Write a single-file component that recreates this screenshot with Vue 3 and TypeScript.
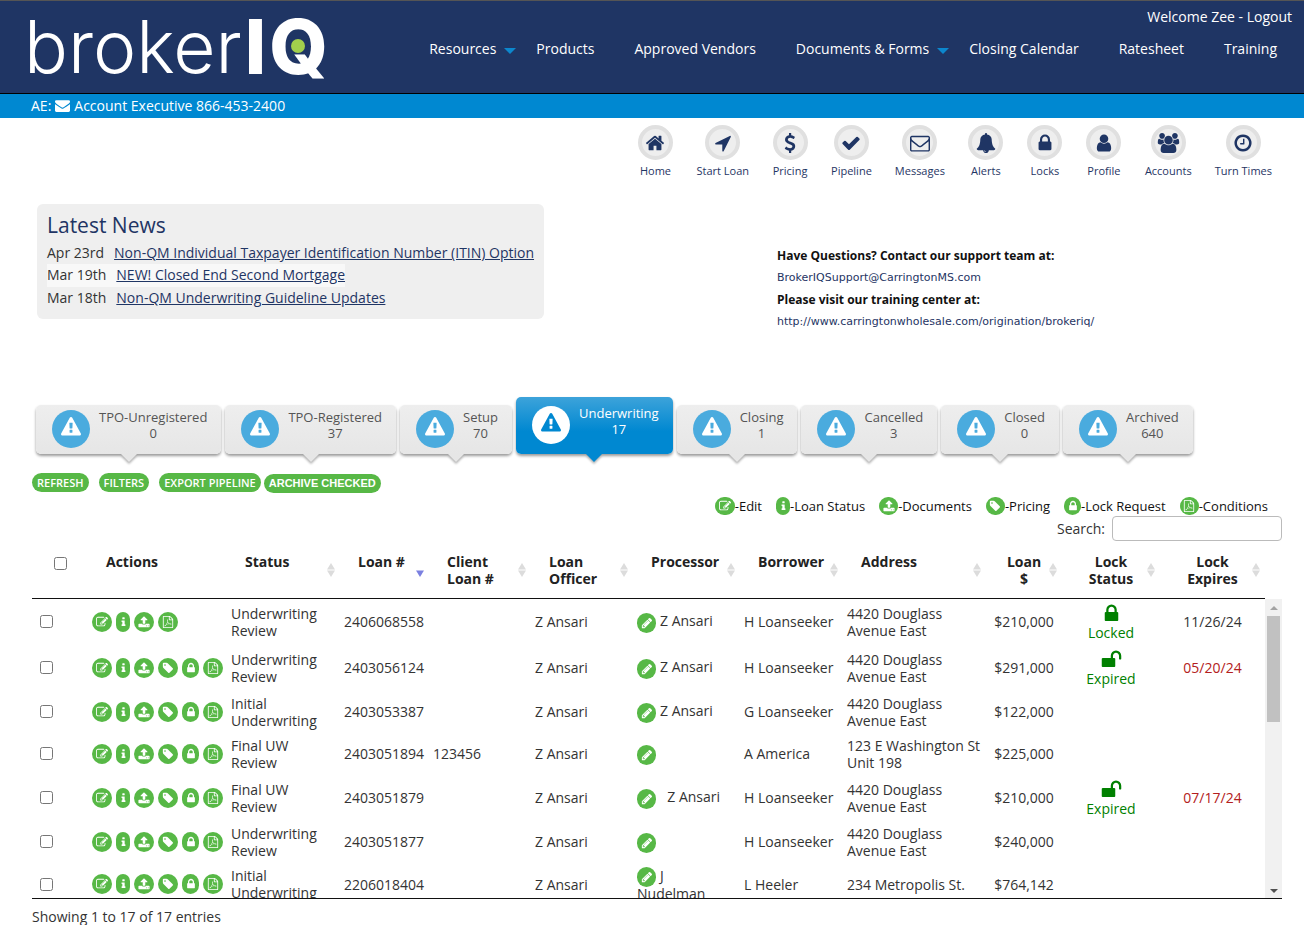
<script setup lang="ts">
import { ref } from 'vue'

type IconName =
  | 'home' | 'arrow' | 'dollar' | 'check' | 'envelopeO' | 'envelope' | 'bell' | 'lock' | 'unlock'
  | 'user' | 'users' | 'clock' | 'warning' | 'edit' | 'info' | 'upload' | 'tag' | 'pdf' | 'pencil'

const icons: Record<IconName, string> = {
  home: 'M1472 992v480q0 26-19 45t-45 19h-384v-384h-256v384h-384q-26 0-45-19t-19-45v-480q0-1 .5-3t.5-3l575-474 575 474q1 2 1 6zm223-69l-62 74q-8 9-21 11h-3q-13 0-21-7l-692-577-692 577q-12 8-24 7-13-2-21-11l-62-74q-8-10-7-23.5t11-21.5l719-599q32-26 76-26t76 26l244 204v-195q0-14 9-23t23-9h192q14 0 23 9t9 23v408l219 182q10 8 11 21.5t-7 23.5z',
  arrow: 'M1593 349l-640 1280q-17 35-57 35-5 0-15-2-22-5-35.5-22.5t-13.5-39.5v-576h-576q-22 0-39.5-13.5t-22.5-35.5 4-42 29-30l1280-640q13-7 29-7 27 0 45 19 15 14 18.5 34.5t-6.5 39.5z',
  dollar: 'M1362 1185q0 153-99.5 263.5t-258.5 136.5v175q0 14-9 23t-23 9h-135q-13 0-22.5-9.5t-9.5-22.5v-175q-66-9-127.5-31t-101.5-44.5-74-48-46.5-37.5-17.5-18q-17-21-2-41l103-135q7-10 23-12 15-2 24 9l2 2q113 99 243 125 37 8 74 8 81 0 142.5-43t61.5-122q0-28-15-53t-33.5-42-58.5-37.5-66-32-80-32.5q-39-16-61.5-25t-61.5-26.5-62.5-31-56.5-35.5-53.5-42.5-43.5-49-35.5-58-21-66.5-8.5-78q0-138 98-242t255-134v-180q0-13 9.5-22.5t22.5-9.5h135q14 0 23 9t9 23v176q57 6 110.5 23t87 33.5 63.5 37.5 39 29 15 14q17 18 5 38l-81 146q-8 15-23 16-14 3-27-7-3-3-14.5-12t-39-26.5-58.5-32-74.5-26-85.5-11.5q-95 0-155 43t-60 111q0 26 8.5 48t29.5 41.5 39.5 33 56 31 60.5 27 70 27.5q53 20 81 31.5t76 35 75.5 42.5 62 50 53 63.5 31.5 76.5 13 94z',
  check: 'M1671 566q0 40-28 68l-724 724-136 136q-28 28-68 28t-68-28l-136-136-362-362q-28-28-28-68t28-68l136-136q28-28 68-28t68 28l294 295 656-657q28-28 68-28t68 28l136 136q28 28 28 68z',
  envelopeO: 'M1664 1504v-768q-32 36-69 66-268 206-426 338-51 43-83 67t-86.5 48.5-102.5 24.5h-2q-48 0-102.5-24.5t-86.5-48.5-83-67q-158-132-426-338-37-30-69-66v768q0 13 9.5 22.5t22.5 9.5h1472q13 0 22.5-9.5t9.5-22.5zm0-1051v-24.5l-.5-13-3-12.5-5.5-9-9-7.5-14-2.5h-1472q-13 0-22.5 9.5t-9.5 22.5q0 168 147 284 193 152 401 317 6 5 35 29.5t46 37.5 44.5 31.5 50.5 27.5 43 9h2q20 0 43-9t50.5-27.5 44.5-31.5 46-37.5 35-29.5q208-165 401-317 54-43 100.5-115.5t46.5-131.5zm128-37v1088q0 66-47 113t-113 47h-1472q-66 0-113-47t-47-113v-1088q0-66 47-113t113-47h1472q66 0 113 47t47 113z',
  envelope: 'M1792 710v794q0 66-47 113t-113 47h-1472q-66 0-113-47t-47-113v-794q44 49 101 87 362 246 497 345 57 42 92.5 65.5t94.5 48 110 24.5h2q51 0 110-24.5t94.5-48 92.5-65.5q170-123 498-345 57-39 100-87zm0-294q0 79-49 151t-122 123q-376 261-468 325-10 7-42.5 30.5t-54 38-52 32.5-57.5 27-50 9h-2q-23 0-50-9t-57.5-27-52-32.5-54-38-42.5-30.5q-91-64-262-182.5t-205-142.5q-62-42-117-115.5t-55-136.5q0-78 41.5-130t118.5-52h1472q65 0 112.5 47t47.5 113z',
  bell: 'M912 1696q0-16-16-16-59 0-101.5-42.5t-42.5-101.5q0-16-16-16t-16 16q0 73 51.5 124.5t124.5 51.5q16 0 16-16zm816-288q0 52-38 90t-90 38h-448q0 106-75 181t-181 75-181-75-75-181h-448q-52 0-90-38t-38-90q50-42 91-88t85-119.5 74.5-158.5 50-206 19.5-260q0-152 117-282.5t307-158.5q-8-19-8-39 0-40 28-68t68-28 68 28 28 68q0 20-8 39 190 28 307 158.5t117 282.5q0 139 19.5 260t50 206 74.5 158.5 85 119.5 91 88z',
  lock: 'M640 768h512v-192q0-106-75-181t-181-75-181 75-75 181v192zm832 96v576q0 40-28 68t-68 28h-960q-40 0-68-28t-28-68v-576q0-40 28-68t68-28h32v-192q0-184 132-316t316-132 316 132 132 316v192h32q40 0 68 28t28 68z',
  unlock: 'M1728 576v256q0 26-19 45t-45 19h-64q-26 0-45-19t-19-45v-256q0-106-75-181t-181-75-181 75-75 181v192h96q40 0 68 28t28 68v576q0 40-28 68t-68 28h-960q-40 0-68-28t-28-68v-576q0-40 28-68t68-28h672v-192q0-185 131.5-316.5t316.5-131.5 316.5 131.5 131.5 316.5z',
  user: 'M1536 1399q0 109-62.5 187t-150.5 78h-854q-88 0-150.5-78t-62.5-187q0-85 8.5-160.5t31.5-152 58.5-131 94-89 134.5-34.5q131 128 313 128t313-128q76 0 134.5 34.5t94 89 58.5 131 31.5 152 8.5 160.5zm-256-887q0 159-112.5 271.5t-271.5 112.5-271.5-112.5-112.5-271.5 112.5-271.5 271.5-112.5 271.5 112.5 112.5 271.5z',
  users: 'M657 896q-162 5-265 128h-134q-82 0-138-40.5t-56-118.5q0-353 124-353 6 0 43.5 21t97.5 42.5 119 21.5q67 0 133-23-5 37-5 66 0 159 81 256zm1071 637q0 120-73 189.5t-194 69.5h-874q-121 0-194-69.5t-73-189.5q0-53 3.5-103.5t14-109 26.5-108.5 43-97.5 62-81 85.5-53.5 111.5-20q10 0 43 21.5t73 48 107 48 135 21.5 135-21.5 107-48 73-48 43-21.5q61 0 111.5 20t85.5 53.5 62 81 43 97.5 26.5 108.5 14 109 3.5 103.5zm-1024-1277q0 106-75 181t-181 75-181-75-75-181 75-181 181-75 181 75 75 181zm704 384q0 159-112.5 271.5t-271.5 112.5-271.5-112.5-112.5-271.5 112.5-271.5 271.5-112.5 271.5 112.5 112.5 271.5zm576 225q0 78-56 118.5t-138 40.5h-134q-103-123-265-128 81-97 81-256 0-29-5-66 66 23 133 23 59 0 119-21.5t97.5-42.5 43.5-21q124 0 124 353zm-128-609q0 106-75 181t-181 75-181-75-75-181 75-181 181-75 181 75 75 181z',
  clock: 'M1024 544v448q0 14-9 23t-23 9h-320q-14 0-23-9t-9-23v-64q0-14 9-23t23-9h224v-352q0-14 9-23t23-9h64q14 0 23 9t9 23zm416 352q0-148-73-273t-198-198-273-73-273 73-198 198-73 273 73 273 198 198 273 73 273-73 198-198 73-273zm224 0q0 209-103 385.5t-279.5 279.5-385.5 103-385.5-103-279.5-279.5-103-385.5 103-385.5 279.5-279.5 385.5-103 385.5 103 279.5 279.5 103 385.5z',
  warning: 'M1024 1375v-190q0-14-9.5-23.5t-22.5-9.5h-192q-13 0-22.5 9.5t-9.5 23.5v190q0 14 9.5 23.5t22.5 9.5h192q13 0 22.5-9.5t9.5-23.5zm-2-374l18-459q0-12-10-19-13-11-24-11h-220q-11 0-24 11-10 7-10 21l17 457q0 10 10 16.5t24 6.5h185q14 0 23.5-6.5t10.5-16.5zm-14-934l768 1408q35 63-2 126-17 29-46.5 46t-63.5 17h-1536q-34 0-63.5-17t-46.5-46q-37-63-2-126l768-1408q17-31 47-49t65-18 65 18 47 49z',
  edit: 'M888 1184l116-116-152-152-116 116v56h96v96h56zm440-720q-16-16-33 1l-350 350q-17 17-1 33t33-1l350-350q17-17 1-33zm80 594v190q0 119-84.5 203.5t-203.5 84.5h-832q-119 0-203.5-84.5t-84.5-203.5v-832q0-119 84.5-203.5t203.5-84.5h832q63 0 117 25 15 7 18 23 3 17-9 29l-49 49q-14 14-32 8-23-6-45-6h-832q-66 0-113 47t-47 113v832q0 66 47 113t113 47h832q66 0 113-47t47-113v-126q0-13 9-22l64-64q15-15 35-7t20 29zm-96-738l288 288-672 672h-288v-288zm444 132l-92 92-288-288 92-92q28-28 68-28t68 28l152 152q28 28 28 68t-28 68z',
  info: 'M1216 1344v128q0 26-19 45t-45 19h-512q-26 0-45-19t-19-45v-128q0-26 19-45t45-19h64v-384h-64q-26 0-45-19t-19-45v-128q0-26 19-45t45-19h384q26 0 45 19t19 45v576h64q26 0 45 19t19 45zm-128-1152v192q0 26-19 45t-45 19h-256q-26 0-45-19t-19-45v-192q0-26 19-45t45-19h256q26 0 45 19t19 45z',
  upload: 'M1344 1472q0-26-19-45t-45-19-45 19-19 45 19 45 45 19 45-19 19-45zm256 0q0-26-19-45t-45-19-45 19-19 45 19 45 45 19 45-19 19-45zm128-224v320q0 40-28 68t-68 28h-1472q-40 0-68-28t-28-68v-320q0-40 28-68t68-28h427q21 56 70.5 92t110.5 36h256q61 0 110.5-36t70.5-92h427q40 0 68 28t28 68zm-325-648q-17 40-59 40h-256v448q0 26-19 45t-45 19h-256q-26 0-45-19t-19-45v-448h-256q-42 0-59-40-17-39 14-69l448-448q18-19 45-19t45 19l448 448q31 30 14 69z',
  tag: 'M576 448q0-53-37.5-90.5t-90.5-37.5-90.5 37.5-37.5 90.5 37.5 90.5 90.5 37.5 90.5-37.5 37.5-90.5zm1067 576q0 53-37 90l-491 492q-39 37-91 37-53 0-90-37l-715-716q-38-37-64.5-101t-26.5-117v-416q0-52 38-90t90-38h416q53 0 117 26.5t102 64.5l715 714q37 39 37 91z',
  pdf: 'M1596 380q28 28 48 76t20 88v1152q0 40-28 68t-68 28h-1344q-40 0-68-28t-28-68v-1600q0-40 28-68t68-28h896q40 0 88 20t76 48zm-444-244v376h376q-10-29-22-41l-313-313q-12-12-41-22zm384 1528v-1024h-416q-40 0-68-28t-28-68v-416h-768v1536h1280zm-514-593q33 26 84 56 59-7 117-7 147 0 177 49 16 22 2 52 0 1-1 2l-2 2v1q-6 38-71 38-48 0-115-20t-130-53q-221 24-392 83-153 262-242 262-15 0-28-7l-24-12q-1-1-6-5-10-10-6-36 9-40 56-91.5t132-96.5q14-9 23 6 2 2 2 4 52-85 107-197 68-136 104-262-24-82-30.5-159.5t6.5-127.5q11-40 42-40h22q23 0 35 15 18 21 9 68-2 6-4 8 1 3 1 8v30q-2 123-14 192 55 164 146 238zm-576 411q52-24 137-158-51 40-87.5 84t-49.5 74zm398-920q-15 42-2 132 1-7 7-44 0-3 7-43 1-4 4-8-1-1-1-2t-1-2-1-2q-1-22-13-36 0 1-1 2v2zm-124 661q135-54 284-81-2-1-13-9.5t-16-13.5q-76-67-127-176-27 86-83 197-30 56-45 83zm646-16q-24-24-140-24 76 28 124 28 14 0 18-1 0-1-2-3z',
  pencil: 'M491 1536l91-91-235-235-91 91v107h128v128h107zm523-928q0-22-22-22-10 0-17 7l-542 542q-7 7-7 17 0 22 22 22 10 0 17-7l542-542q7-7 7-17zm-54-192l416 416-832 832h-416v-416zm683 96q0 53-37 90l-166 166-416-416 166-165q36-38 90-38 53 0 91 38l235 234q37 39 37 91z',
}

const nav = [
  { label: 'Resources', menu: true },
  { label: 'Products', menu: false },
  { label: 'Approved Vendors', menu: false },
  { label: 'Documents & Forms', menu: true },
  { label: 'Closing Calendar', menu: false },
  { label: 'Ratesheet', menu: false },
  { label: 'Training', menu: false },
]

const shortcuts: { label: string; icon: IconName }[] = [
  { label: 'Home', icon: 'home' },
  { label: 'Start Loan', icon: 'arrow' },
  { label: 'Pricing', icon: 'dollar' },
  { label: 'Pipeline', icon: 'check' },
  { label: 'Messages', icon: 'envelopeO' },
  { label: 'Alerts', icon: 'bell' },
  { label: 'Locks', icon: 'lock' },
  { label: 'Profile', icon: 'user' },
  { label: 'Accounts', icon: 'users' },
  { label: 'Turn Times', icon: 'clock' },
]

const news = [
  { date: 'Apr 23rd', title: 'Non-QM Individual Taxpayer Identification Number (ITIN) Option' },
  { date: 'Mar 19th', title: 'NEW! Closed End Second Mortgage' },
  { date: 'Mar 18th', title: 'Non-QM Underwriting Guideline Updates' },
]

const stages = [
  { label: 'TPO-Unregistered', count: 0 },
  { label: 'TPO-Registered', count: 37 },
  { label: 'Setup', count: 70 },
  { label: 'Underwriting', count: 17 },
  { label: 'Closing', count: 1 },
  { label: 'Cancelled', count: 3 },
  { label: 'Closed', count: 0 },
  { label: 'Archived', count: 640 },
]
const activeStage = ref('Underwriting')

const legend: { label: string; icon: IconName }[] = [
  { label: 'Edit', icon: 'edit' },
  { label: 'Loan Status', icon: 'info' },
  { label: 'Documents', icon: 'upload' },
  { label: 'Pricing', icon: 'tag' },
  { label: 'Lock Request', icon: 'lock' },
  { label: 'Conditions', icon: 'pdf' },
]

const columns = [
  { key: 'status', lines: ['Status'], sort: 'both' },
  { key: 'loan', lines: ['Loan #'], sort: 'down' },
  { key: 'client', lines: ['Client', 'Loan #'], sort: 'both' },
  { key: 'officer', lines: ['Loan', 'Officer'], sort: 'both' },
  { key: 'processor', lines: ['Processor'], sort: 'both' },
  { key: 'borrower', lines: ['Borrower'], sort: 'both' },
  { key: 'address', lines: ['Address'], sort: 'both' },
  { key: 'amount', lines: ['Loan', '$'], sort: 'both' },
  { key: 'lock', lines: ['Lock', 'Status'], sort: 'both' },
  { key: 'expires', lines: ['Lock', 'Expires'], sort: 'both' },
]
const colKeys = ['check', 'actions', ...columns.map((c) => c.key)]

const shortActions: IconName[] = ['edit', 'info', 'upload', 'pdf']
const allActions: IconName[] = ['edit', 'info', 'upload', 'tag', 'lock', 'pdf']

interface Loan {
  actions: IconName[]
  status: string[]
  loan: string
  client?: string
  processor: string[]
  borrower: string
  address: string[]
  amount: string
  lock?: 'Locked' | 'Expired'
  expires?: string
}

const douglass = ['4420 Douglass', 'Avenue East']
const loans: Loan[] = [
  { actions: shortActions, status: ['Underwriting', 'Review'], loan: '2406068558', processor: ['Z Ansari'], borrower: 'H Loanseeker', address: douglass, amount: '$210,000', lock: 'Locked', expires: '11/26/24' },
  { actions: allActions, status: ['Underwriting', 'Review'], loan: '2403056124', processor: ['Z Ansari'], borrower: 'H Loanseeker', address: douglass, amount: '$291,000', lock: 'Expired', expires: '05/20/24' },
  { actions: allActions, status: ['Initial', 'Underwriting'], loan: '2403053387', processor: ['Z Ansari'], borrower: 'G Loanseeker', address: douglass, amount: '$122,000' },
  { actions: allActions, status: ['Final UW', 'Review'], loan: '2403051894', client: '123456', processor: [], borrower: 'A America', address: ['123 E Washington St', 'Unit 198'], amount: '$225,000' },
  { actions: allActions, status: ['Final UW', 'Review'], loan: '2403051879', processor: ['\u00a0\u00a0Z Ansari'], borrower: 'H Loanseeker', address: douglass, amount: '$210,000', lock: 'Expired', expires: '07/17/24' },
  { actions: allActions, status: ['Underwriting', 'Review'], loan: '2403051877', processor: [], borrower: 'H Loanseeker', address: douglass, amount: '$240,000' },
  { actions: allActions, status: ['Initial', 'Underwriting'], loan: '2206018404', processor: ['J', 'Nudelman'], borrower: 'L Heeler', address: ['234 Metropolis St.'], amount: '$764,142' },
]

const search = ref('')
</script>

<template>
  <div class="page">
    <header class="top">
      <a class="logo" href="#" aria-label="brokerIQ">
        <span class="logo-light">broker</span><span class="logo-bold">I</span><span class="logo-q">Q<i class="logo-dot"></i></span>
      </a>
      <div class="top-right">
        <div class="welcome">Welcome Zee - <a href="#">Logout</a></div>
        <nav class="nav">
          <a v-for="n in nav" :key="n.label" href="#" class="nav-link">{{ n.label }}<i v-if="n.menu" class="caret"></i></a>
        </nav>
      </div>
    </header>

    <div class="ae">
      AE:
      <svg class="ae-icon" viewBox="0 0 1792 1792" aria-hidden="true"><path :d="icons.envelope" /></svg>
      <a href="#">Account Executive 866-453-2400</a>
    </div>

    <nav class="shortcuts" aria-label="Shortcuts">
      <a v-for="s in shortcuts" :key="s.label" href="#" class="shortcut">
        <span class="ring">
          <svg :viewBox="s.icon === 'users' ? '0 0 2048 1792' : '0 0 1792 1792'" :class="{ wide: s.icon === 'users' }" aria-hidden="true"><path :d="icons[s.icon]" /></svg>
        </span>
        <span>{{ s.label }}</span>
      </a>
    </nav>

    <main class="main">
      <section class="intro">
        <div class="news">
          <h2>Latest News</h2>
          <div v-for="(item, i) in news" :key="item.date" class="news-row" :class="{ even: i % 2 === 1 }">
            <span>{{ item.date }}</span><a href="#">{{ item.title }}</a>
          </div>
        </div>
        <div class="support">
          <b>Have Questions? Contact our support team at:</b>
          <a href="#">BrokerIQSupport@CarringtonMS.com</a>
          <b>Please visit our training center at:</b>
          <a href="#">http://www.carringtonwholesale.com/origination/brokeriq/</a>
        </div>
      </section>

      <div class="stages">
        <button v-for="s in stages" :key="s.label" type="button" class="stage" :class="{ active: s.label === activeStage }" @click="activeStage = s.label">
          <span class="badge"><svg viewBox="0 0 1792 1792" aria-hidden="true"><path :d="icons.warning" /></svg></span>
          <span class="stage-text">{{ s.label }}<br />{{ s.count }}</span>
        </button>
      </div>

      <div class="tools">
        <button type="button" class="pill">REFRESH</button>
        <button type="button" class="pill">FILTERS</button>
        <button type="button" class="pill">EXPORT PIPELINE</button>
        <button type="button" class="pill archive">ARCHIVE CHECKED</button>
      </div>

      <div class="legend">
        <span v-for="l in legend" :key="l.label" class="legend-item">
          <i class="act" :class="'act-' + l.icon"><svg viewBox="0 0 1792 1792" aria-hidden="true"><path :d="icons[l.icon]" /></svg></i>-{{ l.label }}
        </span>
      </div>

      <div class="search">
        <label for="search">Search:</label>
        <input id="search" v-model="search" type="text" />
      </div>

      <div class="grid">
        <table class="head">
          <colgroup><col v-for="k in colKeys" :key="k" :class="'c-' + k" /></colgroup>
          <thead>
            <tr>
              <th class="th-check"><input type="checkbox" aria-label="Select all loans" /></th>
              <th>Actions</th>
              <th v-for="c in columns" :key="c.key" :class="'th-' + c.key">
                <template v-for="(line, i) in c.lines" :key="line"><br v-if="i" />{{ line }}</template>
                <svg class="sort" viewBox="0 0 8 14" aria-hidden="true">
                  <path v-if="c.sort === 'both'" d="M4 0L8 6.500H0zM4 14L8 7.500H0z" fill="#dcdcdc" />
                  <path v-else d="M4 14L8 7.500H0z" fill="#7b80e0" />
                </svg>
              </th>
            </tr>
          </thead>
        </table>
        <div class="body">
          <div class="scroller">
            <table>
              <colgroup><col v-for="k in colKeys" :key="k" :class="'c-' + k" /></colgroup>
              <tbody>
                <tr v-for="row in loans" :key="row.loan">
                  <td class="td-check"><input type="checkbox" :aria-label="'Select loan ' + row.loan" /></td>
                  <td>
                    <div class="acts">
                      <button v-for="a in row.actions" :key="a" type="button" class="act" :class="'act-' + a" :aria-label="a">
                        <svg viewBox="0 0 1792 1792" aria-hidden="true"><path :d="icons[a]" /></svg>
                      </button>
                    </div>
                  </td>
                  <td>{{ row.status[0] }}<br />{{ row.status[1] }}</td>
                  <td>{{ row.loan }}</td>
                  <td>{{ row.client }}</td>
                  <td>Z Ansari</td>
                  <td>
                    <button type="button" class="act act-pencil" aria-label="Edit processor"><svg viewBox="0 0 1792 1792" aria-hidden="true"><path :d="icons.pencil" /></svg></button>
                    <template v-for="(line, i) in row.processor" :key="line"><br v-if="i" />{{ line }}</template>
                  </td>
                  <td>{{ row.borrower }}</td>
                  <td><template v-for="(line, i) in row.address" :key="line"><br v-if="i" />{{ line }}</template></td>
                  <td class="mid">{{ row.amount }}</td>
                  <td class="mid lock">
                    <template v-if="row.lock">
                      <svg viewBox="0 0 1792 1792" aria-hidden="true"><path :d="icons[row.lock === 'Locked' ? 'lock' : 'unlock']" /></svg>
                      {{ row.lock }}
                    </template>
                  </td>
                  <td class="mid" :class="{ late: row.lock === 'Expired' }">{{ row.expires }}</td>
                </tr>
              </tbody>
            </table>
          </div>
          <div class="bar" aria-hidden="true">
            <i class="bar-up"></i>
            <i class="bar-thumb"></i>
            <i class="bar-down"></i>
          </div>
        </div>
      </div>
      <p class="showing">Showing 1 to 17 of 17 entries</p>
    </main>
  </div>
</template>

<style>
body {
  background: #fff;
}
</style>

<style scoped>
.page {
  font-family: 'Open Sans', sans-serif;
  font-size: 14px;
  line-height: 17px;
  color: #333;
}
.page * {
  box-sizing: border-box;
}
a {
  color: inherit;
  text-decoration: none;
}
button {
  border: 0;
  padding: 0;
  cursor: pointer;
  font-family: inherit;
}
svg {
  fill: currentColor;
  display: block;
}

.top {
  display: flex;
  justify-content: space-between;
  height: 94px;
  background: #1f3564;
  border-top: 1px solid #555;
  border-bottom: 1px solid #000;
  color: #fff;
}
.logo {
  display: flex;
  gap: 3px;
  padding-left: 24px;
  font-family: Inter, sans-serif;
  font-size: 73px;
  line-height: 92px;
}
.logo-light {
  font-weight: 300;
}
.logo-bold,
.logo-q {
  font-weight: 800;
  font-size: 75px;
}
.logo-q {
  position: relative;
}
.logo-dot {
  position: absolute;
  left: 50%;
  top: 45px;
  width: 14px;
  height: 14px;
  margin: -7px 0 0 -7px;
  border-radius: 50%;
  background: #a2cf4c;
}
.top-right {
  display: flex;
  flex-direction: column;
  align-items: flex-end;
  padding-top: 7px;
}
.welcome {
  padding-right: 12px;
  line-height: 18px;
}
.nav {
  display: flex;
  margin-top: 14px;
  padding-right: 27px;
}
.nav-link {
  display: flex;
  align-items: center;
  margin-left: 40px;
  line-height: 18px;
}
.caret {
  margin: 3px -20px 0 8px;
  border: solid transparent;
  border-width: 6px 6px 0;
  border-top-color: #0c87cd;
}
.nav-link:has(.caret) {
  margin-right: 12px;
}
.nav-link:has(.caret) + .nav-link {
  margin-left: 28px;
}

.ae {
  display: flex;
  align-items: center;
  gap: 4px;
  height: 24px;
  padding: 0 0 2px 31px;
  background: #0088d1;
  color: #fff;
}
.ae-icon {
  width: 15px;
  height: 15px;
}

.shortcuts {
  display: flex;
  justify-content: flex-end;
  gap: 23px;
  padding: 7px 32px 0 0;
  color: #1f3564;
  font-size: 11px;
}
.shortcut {
  display: flex;
  flex-direction: column;
  align-items: center;
  gap: 2px;
  min-width: 36px;
}
.ring {
  display: grid;
  place-items: center;
  width: 35px;
  height: 35px;
  border: 4px solid #e0e0e0;
  border-radius: 50%;
  background: #eee;
}
.ring svg {
  width: 20px;
  height: 20px;
}
.ring svg.wide {
  width: 23px;
}

.main {
  padding: 25px 22px 0 32px;
}
.intro {
  display: grid;
  grid-template-columns: 740px 1fr;
  align-items: start;
  padding-left: 5px;
}
.news {
  justify-self: start;
  min-height: 115px;
  padding: 8px 10px;
  border-radius: 6px;
  background: #efefef;
}
.news h2 {
  margin: 0 0 3px;
  font-size: 21px;
  font-weight: 400;
  line-height: 27px;
  color: #1f3564;
}
.news-row {
  display: flex;
  gap: 10px;
  width: max-content;
  line-height: 22px;
}
.news-row.even {
  padding-bottom: 1px;
  background: #f8f8f8;
}
.news-row a {
  color: #1f3564;
  text-decoration: underline;
}
.support {
  display: flex;
  flex-direction: column;
  gap: 5px;
  padding-top: 43px;
  font-size: 11px;
  color: #111;
}
.support b {
  font-size: 12px;
}
.support a {
  color: #1f3564;
  font-family: 'DejaVu Sans', sans-serif;
}

.stages {
  display: flex;
  align-items: flex-end;
  gap: 4px;
  margin-top: 67px;
  padding-left: 4px;
}
.stage {
  position: relative;
  display: flex;
  align-items: flex-start;
  gap: 9px;
  height: 49px;
  padding: 4px 14px 0 16px;
  border-radius: 5px;
  background: linear-gradient(#eee, #e6e6e6);
  box-shadow: 0 2px 3px rgba(0, 0, 0, 0.4);
  color: #555;
  font-size: 13px;
  line-height: 16px;
}
.stage::after {
  content: '';
  position: absolute;
  left: 50%;
  top: 100%;
  margin-left: -8px;
  border: solid transparent;
  border-width: 8px 8px 0;
  border-top-color: #e6e6e6;
  filter: drop-shadow(0 2px 1px rgba(0, 0, 0, 0.3));
}
.badge {
  display: grid;
  place-items: center;
  width: 38px;
  height: 38px;
  margin-top: 1px;
  border-radius: 50%;
  background: #4aabde;
  color: #fff;
}
.badge svg {
  width: 20px;
  height: 20px;
  margin-bottom: 4px;
}
.stage.active {
  height: 57px;
  padding-top: 8px;
  background: linear-gradient(#3da3da, #0088d1 60%);
  color: #fff;
}
.stage.active::after {
  border-top-color: #0088d1;
}
.stage.active .badge {
  background: #fff;
  color: #0088d1;
}

.tools {
  display: flex;
  gap: 10px;
  margin-top: 19px;
}
.pill {
  height: 19px;
  padding: 0 5px;
  border-radius: 10px;
  background: #57b846;
  color: #fff;
  font-size: 11px;
  font-weight: 600;
  line-height: 19px;
}
.archive {
  margin: 1px 0 0 -7px;
  font-family: 'Liberation Sans', Arial, sans-serif;
  font-weight: 700;
}

.legend {
  display: flex;
  justify-content: flex-end;
  gap: 14px;
  margin-top: 4px;
  padding-right: 14px;
  color: #111;
  font-size: 13px;
}
.legend-item {
  display: flex;
  align-items: center;
}
.act {
  display: inline-grid;
  place-items: center;
  width: 20px;
  height: 20px;
  border-radius: 10px;
  background: #57b846;
  color: #fff;
}
.act svg {
  width: 12px;
  height: 12px;
}
.act-info {
  width: 14px;
}
.act-lock {
  width: 17px;
}
.act-info svg {
  width: 11px;
}
.legend .act {
  height: 18px;
}
.legend .act-upload,
.legend .act-tag,
.legend .act-pdf {
  width: 19px;
}
.act-pencil {
  width: 19px;
  margin: -2px 4px -2px 0;
  vertical-align: middle;
}
.acts {
  display: flex;
  gap: 4px;
}

.search {
  display: flex;
  justify-content: flex-end;
  align-items: center;
  gap: 7px;
  margin-top: 1px;
}
.search input {
  width: 170px;
  height: 25px;
  border: 1px solid #bbb;
  border-radius: 4px;
  background: #fff;
}

table {
  width: 100%;
  table-layout: fixed;
  border-collapse: collapse;
}
.c-check { width: 56px; }
.c-actions { width: 139px; }
.c-status { width: 113px; }
.c-loan { width: 89px; }
.c-client { width: 102px; }
.c-officer { width: 102px; }
.c-processor { width: 107px; }
.c-borrower { width: 103px; }
.c-address { width: 143px; }
.c-amount { width: 76px; }
.c-lock { width: 98px; }
.c-expires { width: 105px; }
.head {
  width: calc(100% - 17px);
  border-bottom: 1px solid #111;
}
th {
  position: relative;
  height: 57px;
  padding: 12px 0 0 18px;
  color: #222;
  font-weight: 700;
  text-align: left;
  vertical-align: top;
}
.th-amount,
.th-lock,
.th-expires {
  padding-left: 0;
  text-align: center;
}
.th-check {
  padding: 16px 0 0 22px;
}
.sort {
  position: absolute;
  right: 5px;
  top: 22px;
  width: 8px;
  height: 14px;
}
input[type='checkbox'] {
  display: block;
  width: 13px;
  height: 13px;
  margin: 0;
}
.body {
  display: flex;
  height: 300px;
  border-bottom: 1px solid #111;
}
.scroller {
  flex: 1;
  overflow-y: auto;
  scrollbar-width: none;
}
td {
  height: 42px;
  padding: 4px 0 4px 4px;
  white-space: nowrap;
}
.td-check {
  padding-left: 8px;
}
.mid {
  padding-left: 0;
  text-align: center;
}
.lock {
  color: #008000;
}
.lock svg {
  width: 21px;
  height: 21px;
  margin: 0 auto;
}
.late {
  color: #b32020;
}
.bar {
  display: flex;
  flex-direction: column;
  align-items: center;
  width: 17px;
  padding: 7px 0 5px;
  background: #f1f1f1;
}
.bar-up {
  border: solid transparent;
  border-width: 0 4px 4px;
  border-bottom-color: #a3a3a3;
}
.bar-thumb {
  width: 13px;
  height: 106px;
  margin: 6px 0 auto;
  background: #c1c1c1;
}
.bar-down {
  border: solid transparent;
  border-width: 4px 4px 0;
  border-top-color: #505050;
}
.showing {
  margin: 9px 0 0;
}
</style>
